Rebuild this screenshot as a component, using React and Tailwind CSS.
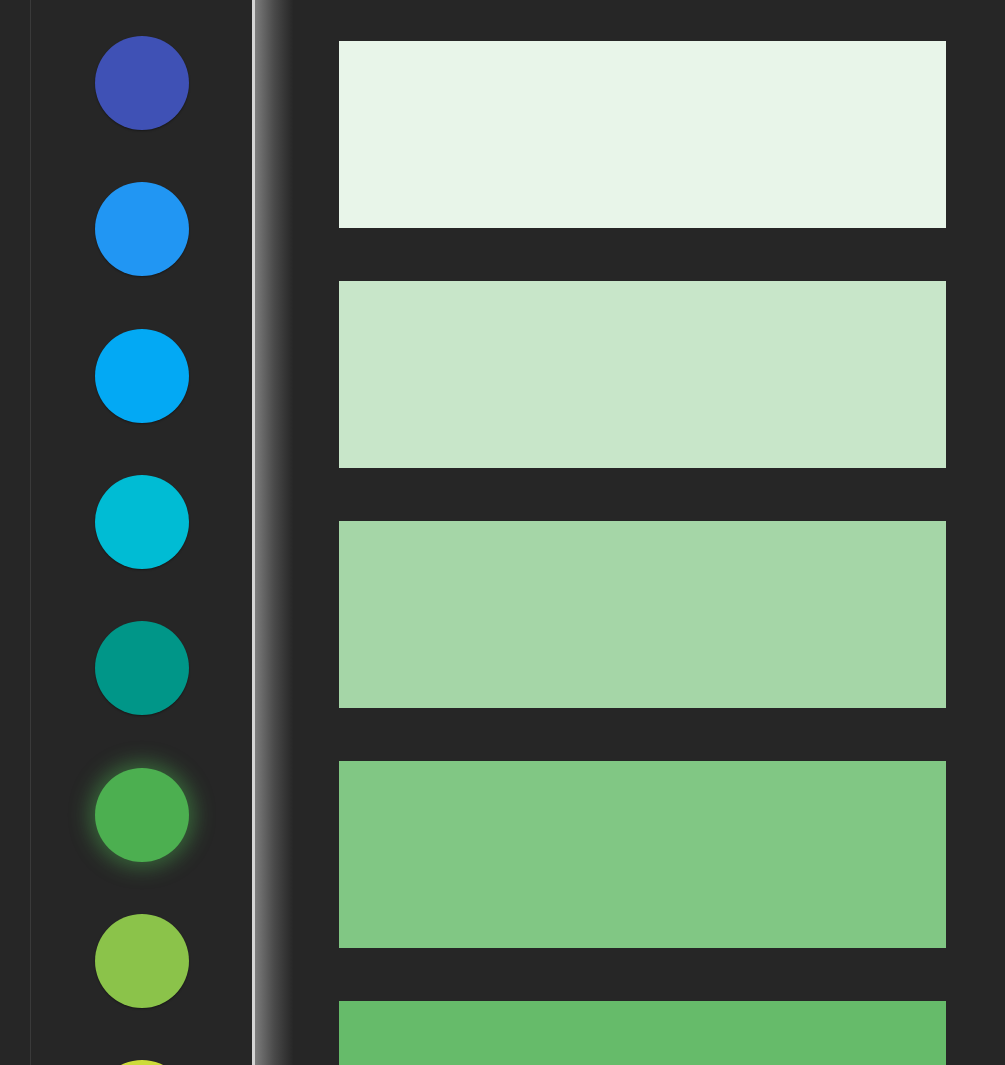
import React from "react";

const dots = [
  { color: "bg-[#3f51b5]" },
  { color: "bg-[#2196f3]" },
  { color: "bg-[#03a9f4]" },
  { color: "bg-[#00bcd4]" },
  { color: "bg-[#009688]" },
  { color: "bg-[#4caf50]", active: true },
  { color: "bg-[#8bc34a]" },
  { color: "bg-[#cddc39]" },
];

const shades = [
  "bg-[#e8f5e9]",
  "bg-[#c8e6c9]",
  "bg-[#a5d6a7]",
  "bg-[#81c784]",
  "bg-[#66bb6a]",
];

export default function App() {
  return (
    <div className="flex h-[1065px] w-full overflow-hidden bg-[#262626]">
      {/* left rail */}
      <div className="w-[31px] shrink-0 border-r border-[#3a3a3a]" />

      {/* palette sidebar */}
      <div className="flex w-[221px] shrink-0 flex-col items-center gap-[52.33px] pt-[36px]">
        {dots.map((d, i) => (
          <div
            key={i}
            className={`h-[94px] w-[94px] shrink-0 rounded-full ${d.color} ${
              d.active
                ? "shadow-[0_0_20px_6px_rgba(76,175,80,0.45)]"
                : "shadow-[0_1px_2px_rgba(0,0,0,0.4)]"
            }`}
          />
        ))}
      </div>

      {/* divider */}
      <div className="w-[3px] shrink-0 bg-[#d4d4d4]" />
      <div className="w-[38px] shrink-0 bg-gradient-to-r from-[#7d7d7d] via-[#4a4a4a] to-[#272727]" />

      {/* shades */}
      <div className="flex flex-1 flex-col gap-[53px] pl-[46px] pr-[59px] pt-[41px]">
        {shades.map((s, i) => (
          <div key={i} className={`h-[187px] w-full shrink-0 ${s}`} />
        ))}
      </div>
    </div>
  );
}
